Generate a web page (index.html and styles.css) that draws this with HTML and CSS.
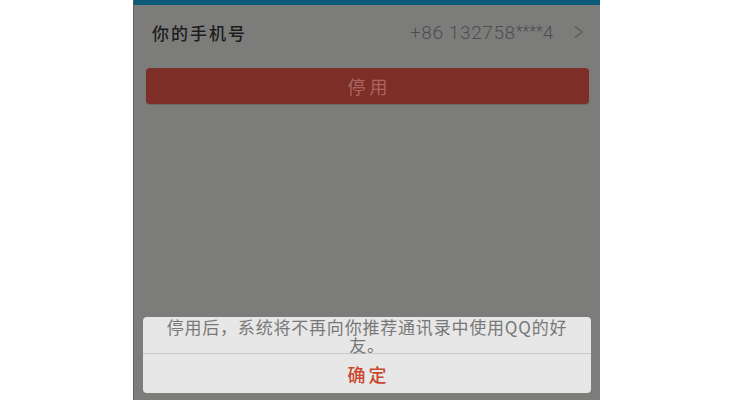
FILE: index.html
```html
<!DOCTYPE html>
<html lang="zh-CN">
<head>
<meta charset="utf-8">
<link rel="stylesheet" href="styles.css">
</head>
<body>
<div class="page">
  <div class="phone">
    <div class="topbar"></div>
    <div class="row">
      <span class="label">你的手机号</span>
      <span class="value">+86 132758<span class="stars">****</span>4</span>
      <svg class="chev" width="11" height="14" viewBox="0 0 11 14"><path d="M2 1.5 L9 7 L2 12.5" fill="none" stroke="#5c5c5c" stroke-width="1.4"/></svg>
    </div>
    <div class="btn">停用</div>
    <div class="dialog">
      <p class="msg">停用后，系统将不再向你推荐通讯录中使用QQ的好<br>友。</p>
      <div class="ok">确定</div>
    </div>
  </div>
</div>
</body>
</html>
```
FILE: styles.css
```css
html, body {
  margin: 0;
  padding: 0;
  background: #ffffff;
}
body {
  width: 750px;
  height: 400px;
  overflow: hidden;
  font-family: "Roboto", "Noto Sans CJK SC", sans-serif;
}
.page {
  display: flex;
  padding-left: 133px;
}
.phone {
  position: relative;
  width: 466px;
  height: 400px;
  background: #7c7c7b;
  border-left: 1px solid #5e5e5e;
  display: flex;
  flex-direction: column;
}
.topbar {
  height: 5px;
  background: #0b5a79;
}
.row {
  height: 54px;
  display: flex;
  align-items: center;
  padding: 0 16px 0 18px;
}
.label {
  font-family: "Noto Sans CJK SC", sans-serif;
  font-size: 17px;
  font-weight: 500;
  letter-spacing: 2px;
  color: #1c1c1c;
  flex: 1;
}
.value {
  font-size: 19px;
  letter-spacing: 0.6px;
  color: #4e4e4e;
  font-weight: 300;
  margin-right: 19px;
}
.stars {
  font-size: 16px;
  position: relative;
  top: -2px;
  letter-spacing: 0;
}
.chev {
  display: block;
}
.btn {
  margin: 9px 11px 0 12px;
  height: 36px;
  border-radius: 4px;
  background: #7d2e27;
  color: #a8655f;
  font-family: "Noto Sans CJK SC", sans-serif;
  font-size: 18px;
  letter-spacing: 4px;
  display: flex;
  align-items: center;
  justify-content: center;
  padding-left: 4px;
  box-shadow: 0 1px 1px rgba(0,0,0,0.15);
}
.dialog {
  position: absolute;
  left: 9px;
  right: 9px;
  top: 317px;
  height: 76px;
  background: #e7e7e7;
  border-radius: 4px;
  display: flex;
  flex-direction: column;
  font-family: "Noto Sans CJK SC", sans-serif;
}
.msg {
  margin: 0;
  height: 37px;
  box-sizing: border-box;
  padding-top: 1px;
  text-align: center;
  white-space: nowrap;
  font-size: 17px;
  line-height: 18px;
  letter-spacing: 0.8px;
  color: #787878;
  border-bottom: 1px solid #c9c9c9;
}
.ok {
  flex: 1;
  display: flex;
  align-items: center;
  justify-content: center;
  font-size: 18px;
  font-weight: 500;
  letter-spacing: 3px;
  padding-left: 3px;
  color: #c9482f;
}
```
